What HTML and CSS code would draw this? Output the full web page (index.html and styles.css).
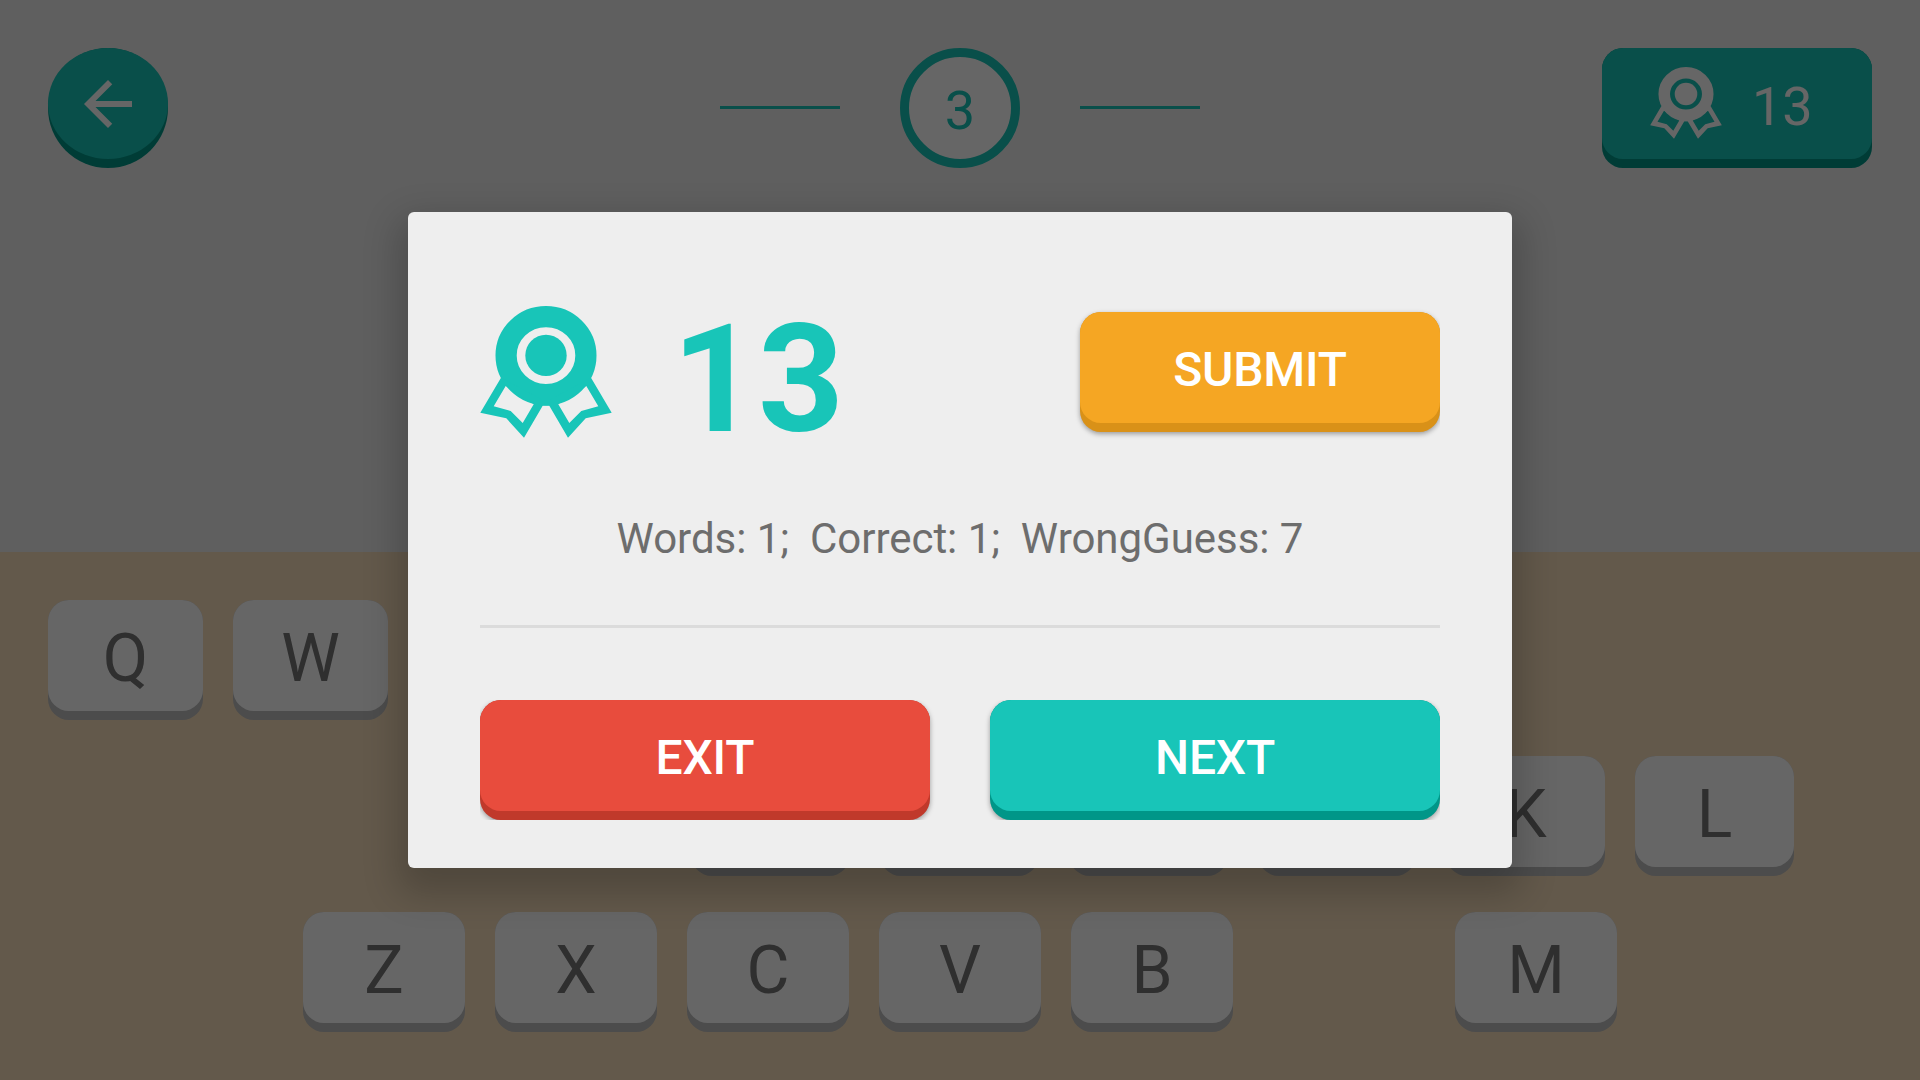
FILE: index.html
```html
<!DOCTYPE html>
<html lang="en">
<head>
<meta charset="utf-8">
<title>Word Game</title>
<link rel="stylesheet" href="styles.css">
</head>
<body>
<svg class="symbols" aria-hidden="true">
  <symbol id="award" viewBox="0 0 132 132">
    <ellipse cx="66" cy="49.6" rx="39.9" ry="39" fill="none" stroke="currentColor" stroke-width="21.2"/>
    <circle cx="66" cy="49.4" r="20.7" fill="currentColor"/>
    <path fill="currentColor" fill-rule="evenodd" d="M21 71.7L.3 106.7L26.3 112.3L44 131.7L62.7 99.7L62.7 94ZM25.7 80L13.7 100.3L30.7 105L42.7 117L53.7 98.3Z"/>
    <path fill="currentColor" fill-rule="evenodd" d="M111 71.7L131.7 106.7L105.7 112.3L88 131.7L69.3 99.7L69.3 94ZM106.3 80L118.3 100.3L101.3 105L89.3 117L78.3 98.3Z"/>
    <path fill="currentColor" d="M61 94H71V99.8H61Z"/>
  </symbol>
</svg>
<main class="game">
  <header class="topbar">
    <button class="btn btn-teal back"><span class="face">
      <svg class="arrow" viewBox="0 0 24 24"><path fill="currentColor" d="M20 11H7.83l5.59-5.59L12 4l-8 8 8 8 1.41-1.41L7.83 13H20z"/></svg>
    </span></button>
    <div class="level">
      <span class="dash"></span>
      <span class="ring">3</span>
      <span class="dash"></span>
    </div>
    <button class="btn btn-teal points"><span class="face">
      <svg class="badge"><use href="#award"/></svg>13</span></button>
  </header>
  <section class="keyboard">
    <div class="row row-top">
      <button class="btn key"><span class="face">Q</span></button>
      <button class="btn key"><span class="face">W</span></button>
    </div>
    <div class="row row-home">
      <i></i><i></i><i></i>
      <button class="btn key"><span class="face"></span></button>
      <button class="btn key"><span class="face"></span></button>
      <button class="btn key"><span class="face"></span></button>
      <button class="btn key"><span class="face"></span></button>
      <button class="btn key"><span class="face">K</span></button>
      <button class="btn key"><span class="face">L</span></button>
    </div>
    <div class="row row-bottom">
      <button class="btn key"><span class="face">Z</span></button>
      <button class="btn key"><span class="face">X</span></button>
      <button class="btn key"><span class="face">C</span></button>
      <button class="btn key"><span class="face">V</span></button>
      <button class="btn key"><span class="face">B</span></button>
      <i></i>
      <button class="btn key"><span class="face">M</span></button>
    </div>
  </section>
</main>
<div class="scrim">
  <section class="dialog">
    <div class="score">
      <svg class="award"><use href="#award"/></svg>
      <span class="total">13</span>
      <button class="btn btn-orange submit"><span class="face">SUBMIT</span></button>
    </div>
    <p class="stats">Words: 1;&nbsp; Correct: 1;&nbsp; WrongGuess: 7</p>
    <div class="divider"></div>
    <div class="actions">
      <button class="btn btn-red"><span class="face">EXIT</span></button>
      <button class="btn btn-teal"><span class="face">NEXT</span></button>
    </div>
  </section>
</div>
</body>
</html>
```
FILE: styles.css
```css
* {
  box-sizing: border-box;
}

body {
  margin: 0;
  font-family: Roboto, sans-serif;
  overflow: hidden;
}

.symbols {
  display: none;
}

.game {
  width: 1920px;
  height: 1080px;
  display: flex;
  flex-direction: column;
  justify-content: space-between;
  background: #eee;
}

/* Raised buttons: a darker base with a lighter face 9px shorter */
.btn {
  display: block;
  height: 120px;
  padding: 0 0 9px;
  border: 0;
  border-radius: 21px;
  font: 500 48px/1 Roboto, sans-serif;
  letter-spacing: -0.2px;
  color: #fff;
}

.face {
  display: flex;
  align-items: center;
  justify-content: center;
  height: 111px;
  padding-top: 0.1em;
  border-radius: 21px;
}

.btn-teal { background: #009688; }
.btn-teal .face { background: #18c5b8; }
.btn-orange { background: #d99118; }
.btn-orange .face { background: #f5a623; }
.btn-red { background: #c0392b; }
.btn-red .face { background: #e84c3d; }

.topbar {
  display: grid;
  grid-template-columns: 1fr auto 1fr;
  padding: 48px;
}

.back {
  width: 120px;
  border-radius: 50%;
}

.back .face {
  padding-top: 1px;
  border-radius: 50%;
}

.arrow {
  width: 72px;
  height: 72px;
}

.level {
  display: flex;
  align-items: center;
  gap: 60px;
}

.dash {
  width: 120px;
  height: 3px;
  margin-bottom: 1px;
  background: #18c5b8;
}

.ring {
  display: flex;
  align-items: center;
  justify-content: center;
  width: 120px;
  height: 120px;
  padding-top: 0.1em;
  border: 9px solid #18c5b8;
  border-radius: 50%;
  background: #fff;
  font-size: 54px;
  line-height: 1;
  color: #18c5b8;
}

.points {
  width: 270px;
  justify-self: end;
  font-size: 54px;
  font-weight: 400;
  letter-spacing: 0;
}

.points .face {
  justify-content: flex-start;
  gap: 30px;
  padding-top: 7px;
  padding-left: 48px;
}

.badge {
  width: 72px;
  height: 72px;
  margin-top: -8px;
}

.keyboard {
  display: flex;
  flex-direction: column;
  gap: 36px;
  height: 528px;
  padding: 48px 0;
  background: #f8dfbc;
}

.row {
  display: flex;
  gap: 30px;
  height: 120px;
}

.row > * {
  flex: 1 1 0;
}

.row-top { padding: 0 48px; }
.row-top .key { flex: 0 0 155px; }
.row-home { padding: 0 126px 0 125px; }
.row-bottom { padding: 0 303px; }

.key {
  background: #bdbdbd;
  font-size: 66px;
  font-weight: 400;
  letter-spacing: 0;
  color: #757575;
}

.key .face {
  background: #fff;
}

.scrim {
  position: absolute;
  inset: 0;
  display: flex;
  align-items: center;
  justify-content: center;
  background: rgba(0, 0, 0, 0.6);
}

.dialog {
  width: 1104px;
  height: 656px;
  padding: 94px 72px 48px;
  border-radius: 6px;
  background: #eee;
  box-shadow: 0 16px 36px 10px rgba(0, 0, 0, 0.2);
}

.score {
  display: flex;
  align-items: center;
  height: 132px;
  clip-path: inset(0 0 -10px -10px);
}

.award {
  width: 132px;
  height: 132px;
  color: #18c5b8;
}

.total {
  margin-left: 60px;
  padding-top: 0.1em;
  font-size: 150px;
  font-weight: 700;
  line-height: 1;
  color: #18c5b8;
}

.submit {
  width: 360px;
  margin-left: auto;
}

.dialog .btn {
  box-shadow: 0 2px 5px rgba(0, 0, 0, 0.35);
}

.stats {
  margin: 71px 0 56px;
  font-size: 42px;
  line-height: 60px;
  letter-spacing: -0.03px;
  text-align: center;
  color: #6d6d6d;
}

.divider {
  height: 3px;
  background: #dbdbdb;
}

.actions {
  display: flex;
  gap: 60px;
  margin-top: 72px;
  overflow: hidden;
}

.actions .btn {
  flex: 1;
}
```
